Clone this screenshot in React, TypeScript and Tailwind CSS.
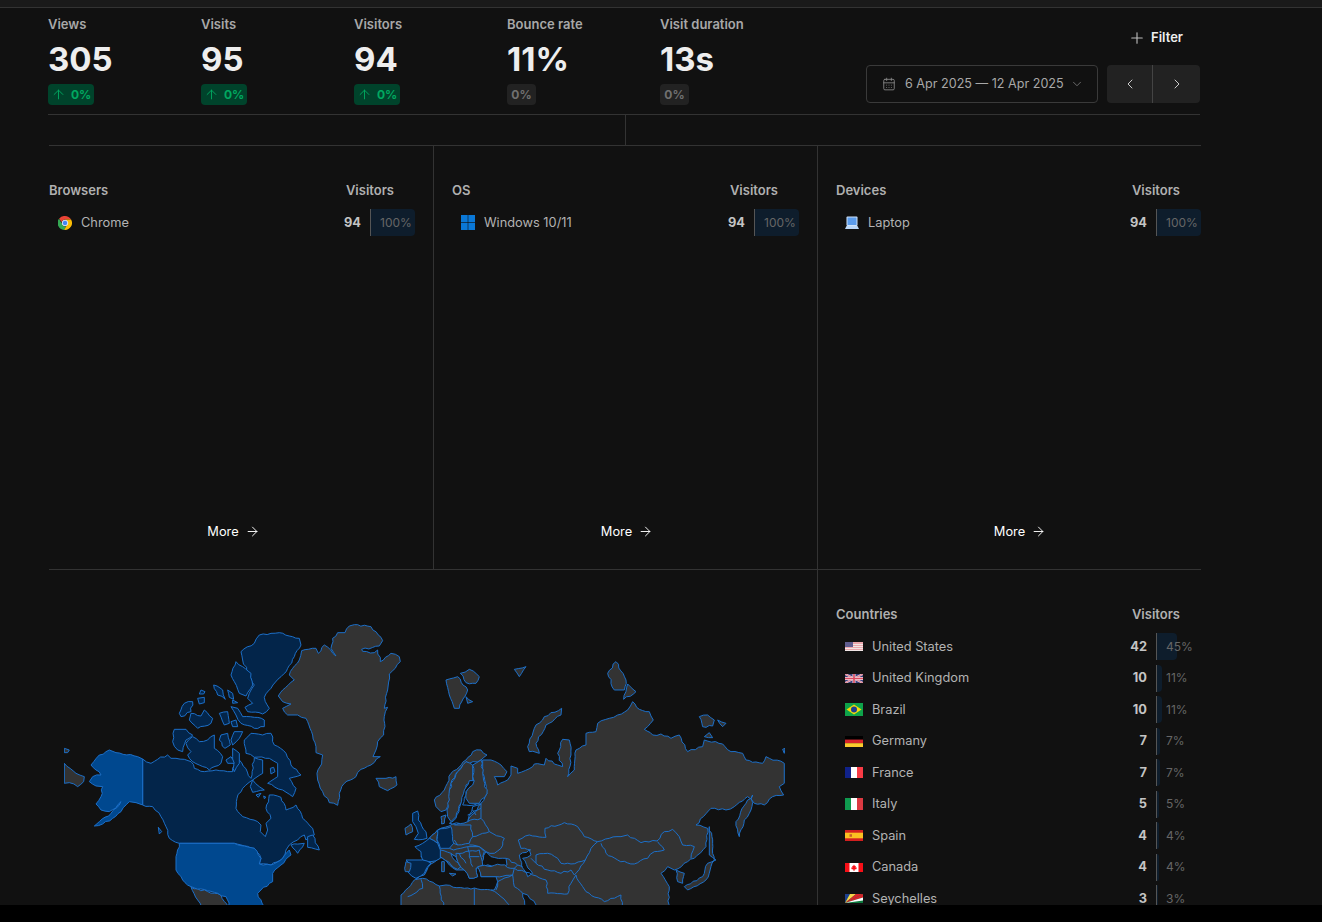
/*
 * Website analytics overview (dark)
 */

import { ArrowRight, ArrowUp, CalendarDays, ChevronDown, ChevronLeft, ChevronRight, Plus } from "lucide-react";
import type { ReactNode } from "react";

const metrics = [
  { label: "Views", value: "305", up: true },
  { label: "Visits", value: "95", up: true },
  { label: "Visitors", value: "94", up: true },
  { label: "Bounce rate", value: "11%", up: false },
  { label: "Visit duration", value: "13s", up: false },
];

function ChromeIcon() {
  return (
    <svg width="14" height="14" viewBox="4 4 40 40">
      <path d="M24 4a20 20 0 0 1 17.3 10H24a10 10 0 0 0-9.6 7.2L7 11.5A20 20 0 0 1 24 4z" fill="#ea4335" />
      <path d="M7 11.5l8.6 15A10 10 0 0 0 28 33.3L21.5 43.8A20 20 0 0 1 7 11.5z" fill="#34a853" />
      <path d="M41.3 14A20 20 0 0 1 21.5 43.8L30 29a10 10 0 0 0-1-12l-5-3z" fill="#fbbc05" />
      <circle cx="24" cy="24" r="8" fill="#4285f4" stroke="#fff" strokeWidth="2.5" />
    </svg>
  );
}

function WindowsIcon() {
  return (
    <svg width="14" height="15" viewBox="0 0 14 15" fill="#0a78d7">
      <rect width="6.7" height="7.2" />
      <rect x="7.3" width="6.7" height="7.2" />
      <rect y="7.8" width="6.7" height="7.2" />
      <rect x="7.3" y="7.8" width="6.7" height="7.2" />
    </svg>
  );
}

function LaptopIcon() {
  return (
    <svg width="14" height="14" viewBox="0 0 14 14">
      <rect x="1.5" y="0.5" width="11" height="9.5" rx="1" fill="#cfe3fb" />
      <rect x="2.5" y="1.5" width="9" height="7.5" fill="#5b9cec" />
      <path d="M1.5 10h11l1.5 3H0z" fill="#bcd8f8" />
    </svg>
  );
}

const flags: Record<string, ReactNode> = {
  us: (
    <>
      <rect width="18" height="9" fill="#eba7ad" />
      <rect y="2" width="18" height="1" fill="#f1e6e6" />
      <rect y="4" width="18" height="1" fill="#f1e6e6" />
      <rect y="6" width="18" height="1" fill="#f1e6e6" />
      <rect y="8" width="18" height="1" fill="#f1e6e6" />
      <rect width="8" height="5" fill="#5f5c8e" />
    </>
  ),
  gb: (
    <>
      <rect width="18" height="9" fill="#3b3f7c" />
      <path d="M0 0l18 9M18 0L0 9" stroke="#f3dfe3" strokeWidth="2" />
      <path d="M0 0l18 9M18 0L0 9" stroke="#d9485f" strokeWidth=".7" />
      <path d="M9 0v9M0 4.500h18" stroke="#f3dfe3" strokeWidth="3" />
      <path d="M9 0v9M0 4.500h18" stroke="#d9485f" strokeWidth="1.600" />
    </>
  ),
  br: (
    <>
      <rect width="18" height="13" fill="#0ea34a" />
      <path d="M9 1.500l7.500 5-7.500 5-7.500-5z" fill="#f5d90a" />
      <circle cx="9" cy="6.500" r="3" fill="#1d3f8f" />
    </>
  ),
  de: (
    <>
      <rect width="18" height="3.600" fill="#000" />
      <rect y="3.600" width="18" height="3.600" fill="#d8232a" />
      <rect y="7.200" width="18" height="3.800" fill="#fccb2d" />
    </>
  ),
  fr: (
    <>
      <rect width="6" height="11" fill="#10228a" />
      <rect x="6" width="6" height="11" fill="#fff" />
      <rect x="12" width="6" height="11" fill="#f93b45" />
    </>
  ),
  it: (
    <>
      <rect width="6" height="12" fill="#0f9a4f" />
      <rect x="6" width="6" height="12" fill="#fff" />
      <rect x="12" width="6" height="12" fill="#dc3a42" />
    </>
  ),
  es: (
    <>
      <rect width="18" height="11" fill="#d21f1f" />
      <rect y="2.700" width="18" height="5.600" fill="#fbc021" />
      <rect x="4.500" y="4.200" width="2.500" height="2.600" fill="#c8602a" />
    </>
  ),
  ca: (
    <>
      <rect width="18" height="9" fill="#fff" />
      <rect width="4.500" height="9" fill="#f80f17" />
      <rect x="13.500" width="4.500" height="9" fill="#f80f17" />
      <path d="M9 1.500l1 1.700.9-.4-.3 2 1.200-.6-.4 1.300.6.500-2.400.6v1.200h-1.200V6.600l-2.400-.6.600-.5-.4-1.300 1.200.6-.3-2 .9.400z" fill="#f80f17" />
    </>
  ),
  sc: (
    <>
      <rect width="18" height="9" fill="#0d7a3e" />
      <path d="M0 9L5 0H0z" fill="#1d3f8f" />
      <path d="M0 9L11 0H5z" fill="#f6d44a" />
      <path d="M0 9L18 0H11z" fill="#d8232a" />
      <path d="M0 9L18 3.500V0z" fill="#d8232a" />
      <path d="M0 9L18 6.500V3.500z" fill="#fff" />
    </>
  ),
};

const flagSizes: Record<string, string> = {
  us: "0 0 18 9",
  gb: "0 0 18 9",
  br: "0 0 18 13",
  de: "0 0 18 11",
  fr: "0 0 18 11",
  it: "0 0 18 12",
  es: "0 0 18 11",
  ca: "0 0 18 9",
  sc: "0 0 18 9",
};

function Flag({ code }: { code: string }) {
  return (
    <svg width="18" viewBox={flagSizes[code]} className="block">
      {flags[code]}
    </svg>
  );
}

const countries = [
  { code: "us", name: "United States", count: 42, pct: 45 },
  { code: "gb", name: "United Kingdom", count: 10, pct: 11 },
  { code: "br", name: "Brazil", count: 10, pct: 11 },
  { code: "de", name: "Germany", count: 7, pct: 7 },
  { code: "fr", name: "France", count: 7, pct: 7 },
  { code: "it", name: "Italy", count: 5, pct: 5 },
  { code: "es", name: "Spain", count: 4, pct: 4 },
  { code: "ca", name: "Canada", count: 4, pct: 4 },
  { code: "sc", name: "Seychelles", count: 3, pct: 3 },
];

function Row({ icon, name, count, pct }: { icon: ReactNode; name: string; count: number; pct: number }) {
  return (
    <div className="flex h-[27px] mb-[4.5px] items-center text-[12.8px]">
      <div className="flex flex-1 items-center gap-[9px] pl-[9px] text-[#b3b3b3]">
        <span className="flex items-center justify-center">{icon}</span>
        <span>{name}</span>
      </div>
      <span className="font-bold text-[#c4c4c4] mr-[9px]">{count}</span>
      <div className="relative flex h-full w-[45px] items-center border-l border-[#555]">
        <div className="absolute inset-y-0 left-0 rounded-r bg-[#0e1d2c]" style={{ width: `${(pct / 100) * 44}px` }} />
        <span className="relative ml-[9px] text-[12px] text-[#666]">{pct}%</span>
      </div>
    </div>
  );
}

function PanelHeader({ title }: { title: string }) {
  return (
    <div className="flex h-[20px] items-center justify-between pr-[21px] mb-[8px] text-[13px] font-semibold text-[#b0b0b0]">
      <span>{title}</span>
      <span>Visitors</span>
    </div>
  );
}

function More() {
  return (
    <button className="flex w-full items-center justify-center gap-[6px] text-[12.8px] text-white">
      More
      <ArrowRight size={15} strokeWidth={1.5} className="-mr-[3px]" />
    </button>
  );
}

const ACTIVE = "#00488f";
const DARK = "#03254a";
const GRAY = "#333333";
const LINE = "#1c6fc9";
const SEA = "#111111";

// long coast edges get a small fixed wobble so they don't read as straight cuts;
// straight horizontal/vertical edges are real borders or the map edge and stay as they are
function rough(points: string, closed = true) {
  const pts = points.split(" ").map((p) => p.split(",").map(Number));
  const out: string[] = [];
  pts.forEach(([x, y], i) => {
    out.push(`${x},${y}`);
    const next = pts[i + 1] ?? (closed ? pts[0] : null);
    if (!next) return;
    const dx = next[0] - x;
    const dy = next[1] - y;
    const len = Math.hypot(dx, dy);
    if (len < 22 || dx === 0 || dy === 0) return;
    const steps = Math.floor(len / 10);
    for (let s = 1; s < steps; s++) {
      const n = Math.sin((x + s * 7) * 12.9898 + (y + s) * 78.233) * 43758.5453;
      const off = ((n - Math.floor(n)) - 0.5) * 6;
      out.push(`${(x + (dx * s) / steps - (dy / len) * off).toFixed(1)},${(y + (dy * s) / steps + (dx / len) * off).toFixed(1)}`);
    }
  });
  return out.join(" ");
}

// traced at 3x, hence the transform on each group below
const americas: [string, string][] = [
  [GRAY, "940,44 990,50 1025,92 1015,108 962,118 965,124 1000,128 1010,120 1018,155 1050,130 1075,140 1078,155 1045,192 1040,240 1030,295 1040,292 1030,320 1032,350 1028,375 1010,395 1005,420 996,440 1018,440 990,465 960,478 945,500 910,520 895,550 890,586 865,578 845,545 830,510 828,490 842,462 845,435 825,428 825,410 815,375 795,325 770,315 740,315 725,295 750,282 725,275 712,258 725,240 760,210 745,195 755,175 775,150 782,122 825,115 832,130 850,105 885,138 870,115 875,85 890,68 912,68 925,48"],
  [GRAY, "1005,505 1035,505 1065,500 1068,525 1040,542 1015,530"],
  [GRAY, "70,460 105,490 130,500 128,515 110,530 85,518 70,520"],
  [GRAY, "70,415 85,420 80,428 70,428"],
  [GRAY, "450,832 540,855 568,900 490,900 470,870"],
  [DARK, "305,447 330,460 350,448 380,435 390,445 405,445 430,448 450,455 460,475 490,485 525,480 560,485 575,485 580,455 595,450 630,505 640,443 665,450 665,490 635,510 605,535 588,565 585,595 605,620 650,635 660,645 658,665 673,680 680,660 675,640 690,625 675,595 685,555 720,562 735,600 765,585 785,625 815,655 820,675 795,690 790,675 770,690 745,705 735,720 725,745 690,765 655,762 660,745 640,715 610,708 580,700 415,700 385,685 375,650 360,620 335,590 305,585"],
  [DARK, "610,390 630,370 665,375 690,370 700,405 735,430 750,465 780,495 745,505 765,535 755,560 725,540 680,520 710,500 710,460 685,445 640,442 615,430"],
  [DARK, "435,400 455,380 475,395 500,390 520,375 520,415 545,440 540,460 505,480 455,455 440,435 450,425"],
  [DARK, "400,358 435,358 455,375 435,390 425,425 410,420 395,395"],
  [DARK, "540,375 560,370 568,405 552,415 535,390"],
  [DARK, "580,365 605,365 595,385 575,405 570,390"],
  [DARK, "575,415 595,430 595,460 580,485 575,455 575,440"],
  [DARK, "555,450 570,440 580,460 560,460"],
  [DARK, "635,510 655,530 670,540 635,547 628,530"],
  [DARK, "645,555 660,550 652,562"],
  [DARK, "668,558 675,562 670,566"],
  [DARK, "688,475 698,472 702,485 690,492"],
  [DARK, "655,75 690,70 715,68 775,85 780,105 760,140 740,175 720,200 690,235 670,262 685,295 665,312 620,305 612,292 635,280 620,265 625,250 640,225 625,195 605,150 600,125 640,100"],
  [DARK, "585,155 605,170 630,190 635,225 615,258 595,250 580,215 570,195"],
  [DARK, "570,290 590,295 605,320 640,322 670,330 670,350 640,355 600,340 585,315"],
  [DARK, "430,280 455,275 450,305 420,320 415,310"],
  [DARK, "450,310 480,318 490,300 515,325 510,340 470,355 445,330"],
  [DARK, "535,310 560,305 565,340 550,345"],
  [DARK, "570,335 585,330 590,350 575,350"],
  [DARK, "470,265 490,262 490,278 475,282"],
  [DARK, "480,240 492,245 488,252 475,252"],
  [DARK, "518,225 545,240 553,268 530,255"],
  [DARK, "560,240 575,250 578,268 565,262"],
  [DARK, "575,270 590,278 575,280"],
  [DARK, "800,680 815,675 835,720 800,712"],
  [DARK, "750,705 790,700 770,730"],
  [DARK, "352,652 362,665 355,672"],
  [ACTIVE, "305,447 305,585 285,578 265,575 240,605 215,625 185,642 160,648 210,610 240,575 225,595 205,605 180,600 165,582 180,560 185,530 165,528 145,515 155,500 180,495 150,465 175,435 205,420 225,428 290,440"],
  [ACTIVE, "415,700 580,700 610,708 640,715 660,745 655,762 690,765 725,745 745,720 750,735 720,765 695,790 695,815 660,840 650,850 670,900 568,900 555,860 530,850 450,830 425,810 405,780 405,740"],
];

const eurasia: [string, string][] = [
  [GRAY, "245,360 270,360 300,375 318,395 310,410 280,410 290,435 320,420 330,405 330,378 350,385 350,400 395,380 400,372 430,375 435,355 470,375 485,380 470,340 485,298 505,300 510,345 500,410 520,390 525,330 555,315 555,280 585,275 590,250 625,235 650,225 680,210 695,185 715,208 745,215 757,240 730,268 755,285 780,282 810,295 835,285 860,335 905,320 910,300 965,312 990,335 1025,340 1035,360 1085,370 1095,350 1150,370 1150,430 1135,440 1148,465 1115,470 1090,495 1060,490 1040,470 1000,500 975,510 930,505 885,555 920,565 915,620 880,655 860,665 820,690 800,680 780,700 805,740 800,815 0,815 0,765 40,720 70,705 90,670 60,650 85,595 110,570 155,552 200,545 240,490 258,460 245,400"],
  [GRAY, "100,480 130,450 150,400 195,360 215,335 240,330 258,345 240,360 205,370 195,365 170,395 150,430 145,490 135,510 120,515 105,500"],
  [GRAY, "195,365 215,375 215,420 195,435 180,490 165,530 150,545 140,530 138,510 145,480 150,430 170,395"],
  [GRAY, "240,360 245,400 258,460 235,490 205,490 195,475 200,445 218,420 215,375"],
  [SEA, "205,422 220,422 215,435 195,455 185,495 240,493 215,500 205,525 200,545 155,552 145,550 165,535 178,495 190,450"],
  [GRAY, "120,530 135,525 130,550 122,552"],
  [SEA, "240,670 255,635 270,650 315,655 318,675 280,680 240,675"],
  [SEA, "355,645 385,630 390,645 365,655 395,700 380,710 362,680"],
  [SEA, "45,718 70,705 90,672 118,652 125,655 145,675 165,690 190,690 205,715 230,710 225,685 245,680 240,710 285,710 290,725 280,750 190,745 135,735 115,738 65,715"],
  [SEA, "365,760 380,765 405,795 405,815 375,815"],
  [GRAY, "118,630 150,640 180,680 170,688 150,675 125,655 118,650"],
  [SEA, "150,642 165,650 190,690 178,680"],
  [GRAY, "165,640 235,630 245,675 225,685 230,710 205,715 190,690 170,665"],
  [GRAY, "230,680 300,675 340,685 335,705 285,710 240,710"],
  [GRAY, "122,665 130,665 130,695 122,695"],
  [GRAY, "145,700 165,702 155,708"],
  [DARK, "35,520 50,513 52,540 75,575 78,595 40,598 52,580 45,560 35,545"],
  [GRAY, "12,565 30,552 35,575 15,585"],
  [GRAY, "85,595 110,570 108,600 110,610"],
  [DARK, "42,620 65,610 85,595 110,610 118,630 118,655 90,665 65,660 60,635"],
  [DARK, "110,570 150,560 158,610 145,625 118,625 108,600"],
  [DARK, "15,660 65,660 90,670 70,700 45,715 32,708 20,695 25,670"],
  [GRAY, "15,665 30,670 25,695 13,695"],
  [GRAY, "135,120 170,110 200,150 175,205 160,205 145,165"],
  [GRAY, "178,100 205,88 235,110 225,130 195,128"],
  [GRAY, "195,170 215,185 200,190"],
  [GRAY, "340,88 375,80 355,110"],
  [GRAY, "380,320 400,265 430,230 482,205 480,225 435,255 405,310 415,340 385,335"],
  [GRAY, "620,100 645,65 675,120 670,150 640,150"],
  [GRAY, "680,132 705,155 668,178"],
  [GRAY, "895,230 920,225 940,240 935,258 905,260"],
  [GRAY, "950,240 975,250 965,260"],
  [GRAY, "910,290 925,278 935,293"],
  [GRAY, "1145,328 1152,325 1150,340"],
  [GRAY, "1005,545 1035,490 1055,465 1050,510 1030,540 1015,590"],
  [GRAY, "825,690 850,700 845,730 830,725"],
  [GRAY, "850,740 905,710 920,670 945,660 925,645 925,560 935,610 940,660 915,720 860,750"],
];

const borders = [
  "352,600 385,585 435,592 432,565 490,548 530,560 550,590 590,605 625,595 660,590 680,585 720,608 768,603 790,575 815,568 835,590 845,615 880,620 870,655",
  "590,605 570,625 553,660 510,672 480,670 470,655 440,640 405,645 405,670 390,655",
  "352,600 360,625 390,630",
  "600,610 615,640 650,660 700,672 740,655 760,635 790,630 770,605",
  "405,670 440,690 480,700 510,690 520,705",
  "340,685 395,705 435,720 440,760 500,762 510,730 525,705 545,740 555,755 610,785 660,765 665,810",
  "553,660 520,705",
  "335,705 340,740 365,760",
  "285,750 290,725 335,705",
  "60,718 65,745 20,770",
  "115,738 130,810",
  "220,745 220,810",
  "270,750 300,770 340,810",
  "160,555 210,555 215,590 205,610 170,615 160,600",
  "215,590 265,575 310,595 300,625 280,640 255,635 235,620 205,615",
  "200,545 240,535 265,575",
  "200,525 240,505 240,535",
  "240,490 240,505",
  "215,510 225,525",
  "145,625 158,630 200,620 205,650 235,650",
  "200,620 235,620 250,635 245,650",
  "175,640 195,670",
  "205,650 215,680",
  "158,610 170,615",
  "315,655 350,675 340,685",
  "350,675 365,680",
];

function WorldMap() {
  return (
    <svg viewBox="48 570 769 335" className="block h-[335px] w-[769px]">
      <defs>
        <clipPath id="map-edge">
          <rect x="63" y="570" width="721" height="335" />
        </clipPath>
      </defs>
      <g clipPath="url(#map-edge)" strokeWidth="3" stroke={LINE} strokeLinejoin="round">
        <g transform="translate(40 610) scale(0.3333)">
          {americas.map(([fill, points]) => (
            <polygon key={points} points={rough(points)} fill={fill} />
          ))}
        </g>
        <g transform="translate(400 640) scale(0.3333)">
          {eurasia.map(([fill, points]) => (
            <polygon key={points} points={rough(points)} fill={fill} />
          ))}
          {borders.map((points) => (
            <polyline key={points} points={rough(points, false)} fill="none" />
          ))}
        </g>
      </g>
    </svg>
  );
}

export default function App() {
  return (
    <div className="h-[922px] overflow-hidden bg-black" style={{ fontFamily: "Inter, sans-serif" }}>
      <div className="h-[905px] overflow-hidden bg-[#111111]">
        <div className="h-[8px] border-b border-[#333] bg-[#1a1a1a]" />

        <div className="ml-[48px] w-[1152px]">
          {/* Metrics */}
          <div className="flex h-[107px] items-start justify-between border-b border-[#333]">
            <div className="grid w-[765px] grid-cols-5 pt-[7px]">
              {metrics.map((m) => (
                <div key={m.label}>
                  <div className="h-[18px] text-[13px] leading-[18px] font-semibold text-[#a8a8a8]">{m.label}</div>
                  <div className="mt-[6px] h-[40px] text-[33px] leading-[40px] font-bold text-[#eeeeee]">{m.value}</div>
                  {m.up ? (
                    <span className="mt-[5px] inline-flex h-[21px] w-[46px] items-center gap-[5px] rounded bg-[#00432b] pl-[3px] text-[12px] font-bold text-[#00a860]">
                      <ArrowUp size={15} strokeWidth={1.5} />
                      0%
                    </span>
                  ) : (
                    <span className="mt-[5px] inline-flex h-[21px] w-[29px] items-center justify-center rounded bg-[#222222] text-[12px] font-bold text-[#707070]">
                      0%
                    </span>
                  )}
                </div>
              ))}
            </div>

            <div className="flex flex-col items-end">
              <button className="mt-[21px] mr-[17px] flex h-[18px] items-center gap-[5px] text-[13px] font-semibold text-[#eeeeee]">
                <Plus size={18} strokeWidth={1.5} className="text-[#bbbbbb]" />
                Filter
              </button>
              <div className="mt-[18px] flex items-center">
                <button className="flex h-[38px] w-[232px] items-center rounded border border-[#3a3a3a] pl-[15px] text-[12.6px] text-[#a8a8a8]">
                  <CalendarDays size={14} strokeWidth={1.5} className="text-[#888888]" />
                  <span className="ml-[9px]">6 Apr 2025 — 12 Apr 2025</span>
                  <ChevronDown size={14} strokeWidth={1.5} className="ml-[6px] text-[#777777]" />
                </button>
                <div className="ml-[9px] flex h-[38px] w-[93px] overflow-hidden rounded bg-[#222222] text-[#cccccc]">
                  <button className="flex w-[46px] items-center justify-center border-r border-[#444]">
                    <ChevronLeft size={16} strokeWidth={1.5} />
                  </button>
                  <button className="flex flex-1 items-center justify-center">
                    <ChevronRight size={16} strokeWidth={1.5} />
                  </button>
                </div>
              </div>
            </div>
          </div>

          {/* Empty chart strip */}
          <div className="flex h-[30px]">
            <div className="w-[578px] border-r border-[#333]" />
          </div>

          {/* Browsers / OS / Devices */}
          <div className="ml-px grid w-[1152px] grid-cols-3 border-t border-b border-[#333]">
            <div className="flex h-[423px] flex-col pt-[35px] pr-[18px]">
              <PanelHeader title="Browsers" />
              <Row icon={<ChromeIcon />} name="Chrome" count={94} pct={100} />
              <div className="mt-auto mb-[28px]">
                <More />
              </div>
            </div>
            <div className="flex h-[423px] flex-col border-l border-[#333] pt-[35px] pr-[18px] pl-[18px]">
              <PanelHeader title="OS" />
              <Row icon={<WindowsIcon />} name="Windows 10/11" count={94} pct={100} />
              <div className="mt-auto mb-[28px]">
                <More />
              </div>
            </div>
            <div className="flex h-[423px] flex-col border-l border-[#333] pt-[35px] pl-[18px]">
              <PanelHeader title="Devices" />
              <Row icon={<LaptopIcon />} name="Laptop" count={94} pct={100} />
              <div className="mt-auto mb-[28px]">
                <More />
              </div>
            </div>
          </div>

          {/* Map + countries */}
          <div className="ml-px grid w-[1152px] grid-cols-3">
            <div className="col-span-2">
              <WorldMap />
            </div>
            <div className="h-[335px] border-l border-[#333] pt-[35px] pl-[18px]">
              <PanelHeader title="Countries" />
              {countries.map((c) => (
                <Row key={c.code} icon={<Flag code={c.code} />} name={c.name} count={c.count} pct={c.pct} />
              ))}
            </div>
          </div>
        </div>
      </div>
    </div>
  );
}
